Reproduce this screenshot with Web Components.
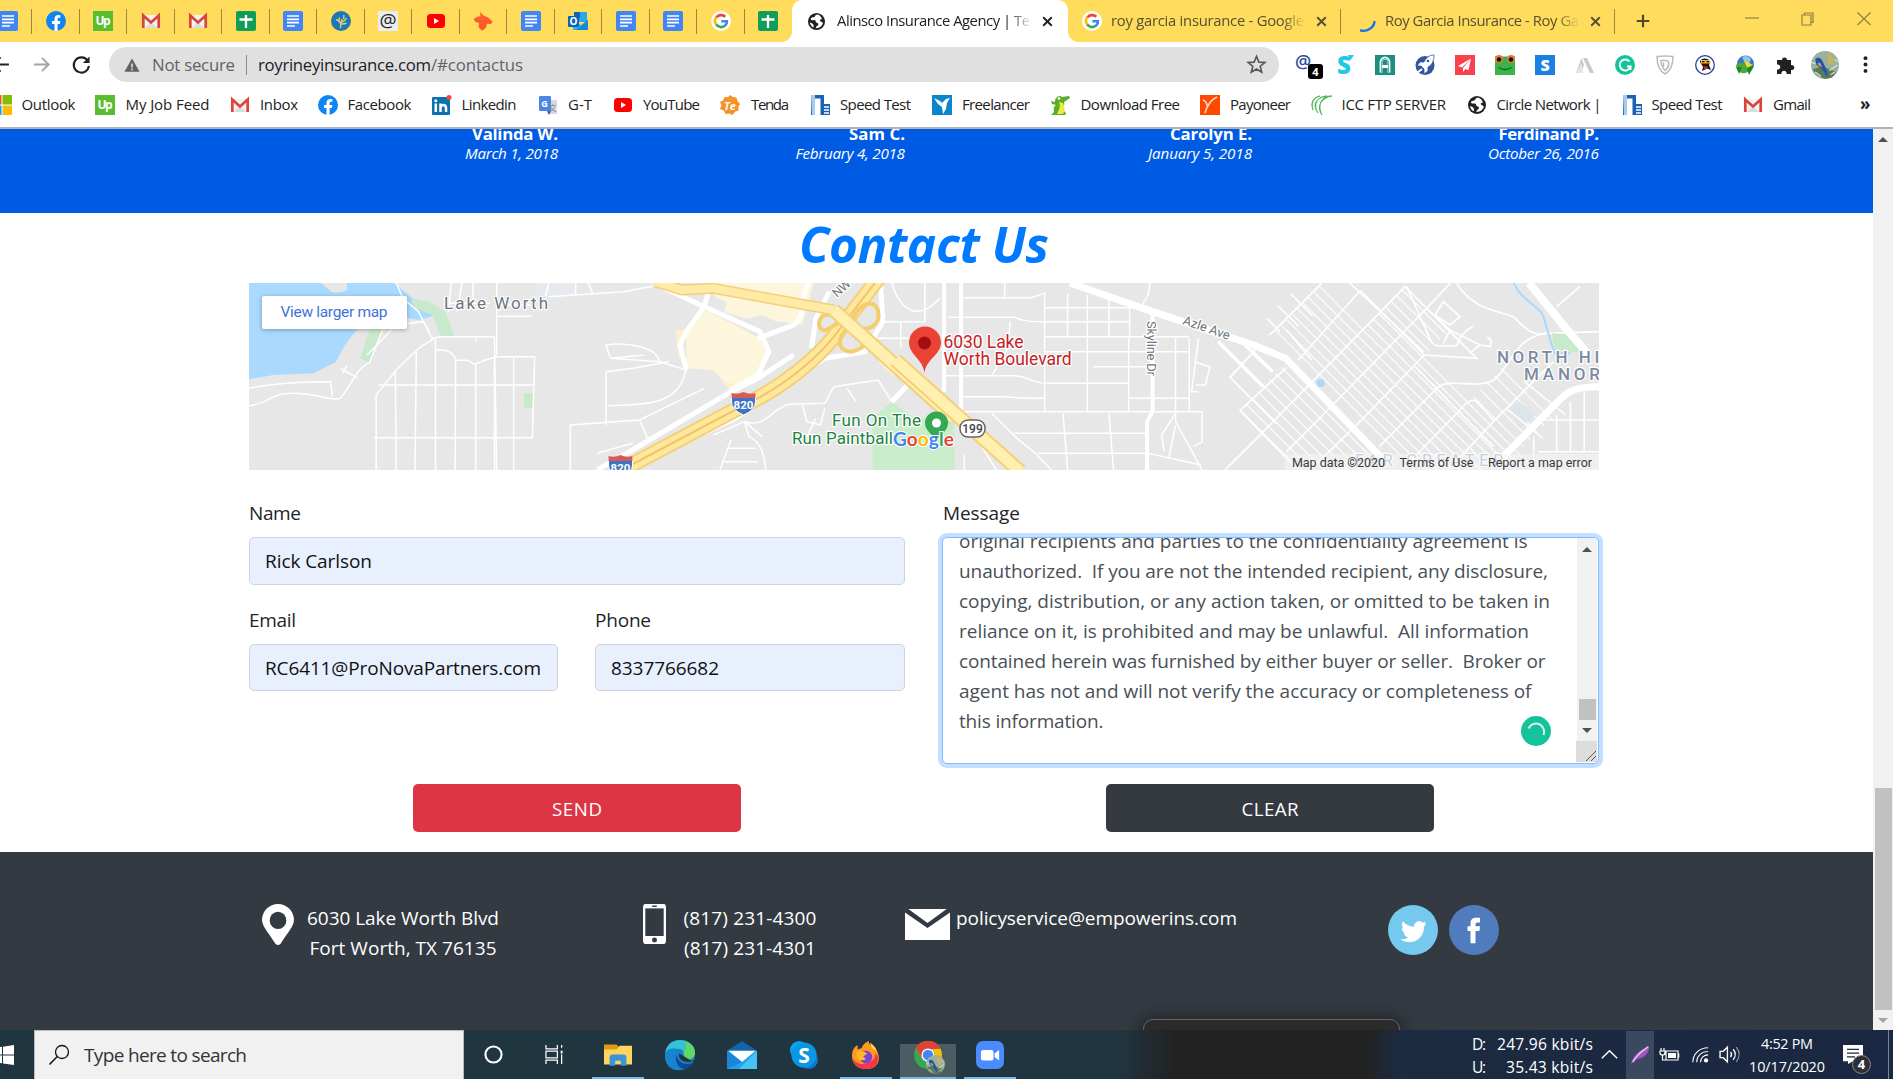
<!DOCTYPE html>
<html lang="en">
<head>
<meta charset="utf-8">
<title>Alinsco Insurance Agency</title>
<style>
html,body{margin:0;height:1079px;overflow:hidden;background:#fff}
body{font-family:"Open Sans","Noto Sans",sans-serif;color:#212529}
</style>
</head>
<body>
<desktop-screen></desktop-screen>
<script>
const define=(name,html,extra)=>{
  const t=document.createElement('template');t.innerHTML=html;
  customElements.define(name,class extends HTMLElement{
    connectedCallback(){
      if(this.shadowRoot)return;
      this.attachShadow({mode:'open'}).append(t.content.cloneNode(true));
      if(extra)extra.call(this,this.shadowRoot);
    }
  });
};

/* Line of text whose tracking is adjusted so that it fills the width in w. */
define('fit-text','<style>:host{display:block;flex:none;white-space:pre;text-align:left}span{display:inline-block;white-space:pre}</style><span></span>',function(r){
  const s=r.querySelector('span'),txt=this.getAttribute('t'),w=+this.getAttribute('w'),size=this.getAttribute('size');
  s.textContent=txt;
  if(size)this.style.fontSize=size+'px';
  const n=s.getBoundingClientRect().width;
  if(w&&n){this.style.width=w+'px';s.style.letterSpacing=((w-n)/Math.max(1,txt.length-1))+'px';}
});

const T=(x,y,s,txt,fill,extra='')=>`<text x="${x}" y="${y}" font-size="${s}" fill="${fill}" text-anchor="middle" font-family="Open Sans,sans-serif" ${extra}>${txt}</text>`;
const docs='<rect width="20" height="20" rx="2" fill="#4285f4"/><path d="M4 5h12M4 8.300h12M4 11.600h12M4 15h8" stroke="#fff" stroke-width="1.700"/>';
const fb='<circle cx="10" cy="10" r="10" fill="#1184f5"/><path d="M8.500 20v-7H6v-3h2.500V8c0-2.700 1.500-4 3.900-4l2 .2v2.500h-1.200c-1.200 0-1.600.7-1.600 1.500V10h2.700l-.4 3h-2.300v7z" fill="#fff"/>';
const up='<rect width="20" height="20" fill="#5bbc2f"/>'+T(10,14,12,'Up','#fff','font-weight="700" textLength="15"');
const gm='<path d="M2 4h16v13H2z" fill="#f2f2f2"/><path d="M4 17l6-6 6 6z" fill="#dcdcdc"/><path d="M2.300 17V4.500L10 11.500l7.700-7V17" fill="none" stroke="#d9453a" stroke-width="2.700"/>';
const sheet='<rect width="20" height="20" rx="2" fill="#0f9d58"/><path d="M10 4v13M3.500 8.500h13" stroke="#fff" stroke-width="2.300"/>';
const yt='<rect x="1" y="3" width="18" height="14" rx="3.500" fill="#f00"/><path d="M8 7v6l5-3z" fill="#fff"/>';
const goog='<circle cx="10" cy="10" r="10" fill="#fff"/><g fill="none" stroke-width="2.600"><path d="M5.300 6.500A6 6 0 0 1 14.300 5.800" stroke="#ea4335"/><path d="M5.300 6.300a6 6 0 0 0 0 7.300" stroke="#fbbc05"/><path d="M5.200 13.500a6 6 0 0 0 8.900 1.100" stroke="#34a853"/><path d="M14 14.800c1.500-1.200 2-2.800 1.900-4.600H10.300" stroke="#4285f4"/></g>';
const globe='<circle cx="10" cy="10" r="9" fill="#202124"/><path d="M11 2.500c-3 .5-2 2-3.500 2.700C6 6 4.500 5.500 4 7c-.3 1.500 2 1.800 3.500 1.500 2 0 1.300 2.500 3 3 1.500.3 2 1.200 1 2.500-.7.900-2 .8-2.200 3 4.500 0 7-3 7.500-5.500-1-1.500-2.300-1-3-2.300-.5-1.200 1-1.700 2.200-1.500C15 5 13.500 3 11 2.500zM3 11c2 .5 3.500 1.300 4 3 .2 1.200-.2 2-.5 2.300C4.500 15 3.200 13 3 11z" fill="#fff"/>';
const speed='<path d="M1 0h13v20H1z" fill="#1c62b4"/><path d="M5 3.500h5.500V20H5z" fill="#fff"/><path d="M1 0h4v20H2z" fill="#a9cbee"/><path d="M12 9h8v11h-8z" fill="#1c62b4"/><path d="M14 12h5M14 15h5M14 18h5" stroke="#fff" stroke-width="1.300"/>';
const bird='<circle cx="10" cy="10" r="10" fill="#9db09b"/><path d="M1 13l7-2 10 4-3 4-5 1-6-3z" fill="#5c7a5a"/><path d="M12 2l3 1 1 4-1 3-3-2z" fill="#c9b35b"/><path d="M3 6c2-2 4-1 5 1l3 6 1 6-4-6-4-3z" fill="#1756b5"/><path d="M5 8l2 1 1 3-3-2z" fill="#e8972c"/><path d="M0 8l3 1M13 14l6-4M3 15l4 3M14 17l3-2M17 6l2 2" stroke="#dfe8dc" stroke-width=".8"/>';
const chrome='<circle cx="10" cy="10" r="10" fill="#34a853"/><path d="M1.300 5A10 10 0 0 1 18.700 5L10 6z" fill="#ea4335"/><path d="M1.300 5L5.700 12.500 10 5.500h8.900A10 10 0 0 1 9.800 20L14.300 12.500A5 5 0 0 0 10 5.200z" fill="#fbbc05"/><path d="M1.300 5L5.700 12.500 10 6 18.900 5.200A10 10 0 0 0 1.300 5z" fill="#dc4437"/><circle cx="10" cy="10" r="4.700" fill="#fff"/><circle cx="10" cy="10" r="3.700" fill="#4285f4"/>';
const ICONS={docs,fb,up,gm,sheet,yt,goog,globe,speed,bird,chrome,
tree:'<circle cx="10" cy="10" r="10" fill="#1d78b4"/><path d="M9.500 17c0-4 .5-6 1.500-9M10 13C8 10 7.500 9 5 8.500M12.500 8c.5-1.500.5-2.500.3-4M11 11c2.500-1 3.500-2 4.500-4M10.500 13c2 0 4 0 5-1M8 10.500C8.300 9 8 7.500 8.500 6.500" stroke="#e3cd85" stroke-width="1.400" fill="none"/>',
at:'<rect width="20" height="20" fill="#e9edf0"/>'+T(10,16,19,'@','#222'),
fox:'<path d="M7 1l3.500 3.500L15 6.500l4.500 4-1.500 2.500-4-.3-1 4-4 3-3.500-3.500L6 12l-3.500-1L.5 8l4.500-2.500 2.500 0z" fill="#ff5a2c"/>',
outlook:'<rect x="6" y="1" width="13" height="10" fill="#28a8ea"/><path d="M6 1h6v6H6z" fill="#0b64b5"/><path d="M5 9l8 5 7-5v10H5z" fill="#2fb5f0"/><path d="M20 9v10H8z" fill="#138ad6"/><rect y="5" width="11" height="11" rx="1" fill="#0a64b8"/>'+T(5.5,14,10,'O','#fff','font-weight="700"'),
ms:'<path d="M0 0h9.500v9.500H0z" fill="#f35325"/><path d="M10.500 0H20v9.500h-9.500z" fill="#81bc06"/><path d="M0 10.500h9.500V20H0z" fill="#05a6f0"/><path d="M10.500 10.500H20V20h-9.500z" fill="#ffba08"/>',
linkedin:'<rect y="2" width="18" height="18" rx="1" fill="#0a72ae"/><path d="M3.800 8.500v8.500M8.500 17V8.500M8.500 13c0-4 5.500-4 5.500 0v4" stroke="#fff" stroke-width="2.500" fill="none"/><circle cx="3.800" cy="5.700" r="1.500" fill="#fff"/><circle cx="17" cy="2.500" r="2.500" fill="#f4473c"/>',
gt:'<path d="M8 5h11v14H10z" fill="#d7dade"/><rect x="1" y="1" width="12" height="15" rx="1" fill="#4a86e8"/><path d="M9 16h4l-2 4z" fill="#2b56c0"/>'+T(6.5,11.5,9,'G','#fff','font-weight="700"')+T(14.5,16,8,'文','#7d858c','style="font-family:Noto Sans CJK SC"'),
tenda:'<path d="M10 0l3 2 3.500.5.8 3.300L20 9l-1.700 3 .2 3.500-3.500 1.200L12.500 20 9 18.500 5.500 19 4 15.700 0 14l1.300-3.700L0 7l3.300-1.700L4.500 2l3.500.2z" fill="#f7922a"/>'+T(10,14.5,11,'Te','#fff','font-weight="700" font-style="italic"'),
freelancer:'<rect width="20" height="20" fill="#0a87cc"/><path d="M2 3l6 3 2 2 4-4 4-1-3 5-1 6-3 5-1-7-4-3z" fill="#fff"/>',
croc:'<path d="M5 5c2-4 5-5 7-3l7-1 1 2-6 4c1 3-1 6-1 8l3 3-1 2H1l3-3c-1-3 0-6 2-7l-4-1-1-3 4 1z" fill="#5aae2b"/><path d="M9 7c2 4 0 8-2 12h6c3-4 1-8 0-11z" fill="#f2ea3a"/><circle cx="9" cy="3.500" r="1.300" fill="#fff"/>',
payoneer:'<rect width="20" height="20" fill="#ff4800"/><path d="M3 5c3 1 4 4 4.500 6M17 2C10 5 7 11 5 18" stroke="#ffd5c4" stroke-width="1.700" fill="none"/>',
icc:'<path d="M20 1C10 0 5 9 10 20 4 12 9 3 20 1zM15 1C5 1 1 10 6 18 0 10 3 3 15 1zM8 1C1 3-1 9 1 15-2 8 1 2 8 1z" fill="#3fae49" stroke="#3fae49" stroke-width=".7"/>',
spin:'<path d="M3 16.500C9 18 15.500 14 16.500 8" stroke="#1a73e8" stroke-width="2.400" fill="none" stroke-linecap="round"/>',
close:'<path d="M5.500 5.500l9 9M14.500 5.500l-9 9" stroke="currentColor" stroke-width="2"/>',
plus:'<path d="M10 3v14M3 10h14" stroke="#4f4830" stroke-width="2.400"/>',
wmin:'<path d="M3 8h14" stroke="#8f7f4a" stroke-width="1.200"/>',
wmax:'<path d="M4 5h9v10H4zM6.500 5V3H15v9.500h-2" stroke="#8f7f4a" fill="none" stroke-width="1.200"/>',
wclose:'<path d="M3.500 2.500l13 12.500M16.500 2.500L3.500 15" stroke="#8f7f4a" stroke-width="1.200"/>',
back:'<path d="M18 10H3M10 3l-7 7 7 7" stroke="#202124" stroke-width="2" fill="none"/>',
fwd:'<path d="M2 10h15M10.500 3l7 7-7 7" stroke="#a3a5a8" stroke-width="2" fill="none"/>',
reload:'<path d="M16.500 6A8 8 0 1 0 17.800 11.500" stroke="#202124" stroke-width="2.200" fill="none"/><path d="M18.500 1.500v7h-7z" fill="#202124"/>',
warn:'<path d="M10 2l9.500 16.500H.5z" fill="#5f6368"/><path d="M10 8v5M10 14.500v2" stroke="#e0e0e0" stroke-width="2"/>',
star:'<path d="M10 1.500l2.500 6 6.300.4-4.900 4 1.600 6.200L10 14.700l-5.500 3.400 1.600-6.200-4.900-4 6.300-.4z" stroke="#55585c" stroke-width="1.700" fill="none"/>',
at2:T(8,12.500,18,'@','#2c4d9d','font-weight="600"'),
scyan:T(9,19,24,'S','#1fc8e8','font-weight="800"')+'<path d="M13 0l6 0-4 6z" fill="#26c7f0"/>',
agreen:'<rect width="20" height="20" fill="#1a8f80"/><path d="M6 17.500V7a4 4 0 0 1 8 0v10.500M6 11.500h8" stroke="#fff" stroke-width="2.800" fill="none"/><path d="M6.500 17V7a3.500 3.500 0 0 1 7 0v10" stroke="#1a8f80" stroke-width=".7" fill="none"/>',
rocket:'<circle cx="10" cy="10.500" r="9.500" fill="#33569e"/><path d="M19 0c-5 0-8 3-10 7H5l-3 4h4l3 3v5l4-3v-4c4-2 6-6 6-12z" fill="#fff" stroke="#33569e" stroke-width=".8"/><circle cx="13" cy="6" r="1.300" fill="#33569e"/><path d="M2 18l5-4" stroke="#fff" stroke-width="2"/>',
plane:'<rect width="20" height="20" fill="#fb414b"/><path d="M16 3.500L3 11l4 1.500zM16 3.500L8 13v4l2.500-3 3 1.300z" fill="#fff"/>',
frog:'<rect y="1.500" width="20" height="18.500" fill="#3bb54a"/><circle cx="4" cy="4" r="4" fill="#e57c35"/><circle cx="16" cy="4" r="4" fill="#e57c35"/><circle cx="4" cy="4.500" r="2.200" fill="#111"/><circle cx="16" cy="4.500" r="2.200" fill="#111"/><path d="M3.500 12.500q6.500 4 13 0" stroke="#185c23" stroke-width="1.400" fill="none"/>',
sblue:'<rect width="20" height="20" fill="#1b7fe3"/>'+T(10,15.5,16,'S','#fff','font-weight="800"'),
aa:'<path d="M1 18L6.500 3 9 10 6 18zM8 3h4l7 15h-4z" fill="#c9c9c9"/><path d="M1 18L6.500 8 8 18z" fill="#e4e4e4"/>',
gram:'<circle cx="10" cy="10" r="10" fill="#15c39a"/><path d="M14.500 6.500a5.500 5.500 0 1 0 1 5H12M15.500 11v4" stroke="#fff" stroke-width="1.900" fill="none"/>',
shield:'<path d="M2 1.500q8-1 16 0c0 9-2 14-8 17.500C4 15.500 2 10.500 2 1.500z" fill="none" stroke="#bbb" stroke-width="1.500"/><path d="M6 5.500h5c4 0 3.500 7-1 10C7 12 6 9 6 5.500zm2.500 2v4" fill="none" stroke="#bbb" stroke-width="1.500"/>',
ninja:'<circle cx="10" cy="10" r="9.300" fill="#fff" stroke="#24439a" stroke-width="1.300"/><path d="M5 7c0-4 8-5 10.500 0L14 10l2 5-4-1.500L7 16l1-4z" fill="#23160f"/><path d="M6 5h9v3.500H6z" fill="#f5b93c"/><path d="M8 11l5 1-3 3z" fill="#d33127"/><path d="M7 6.700h2.500M11.500 6.700H14" stroke="#111" stroke-width="1.300"/>',
idm:'<circle cx="10.500" cy="9" r="8.500" fill="#3d78be"/><path d="M1 10c3-3 6-1 9-3l5 9-5 2c-4 1-8-2-9-8z" fill="#4ca935"/><path d="M7 2q6-3 9 2l-3 7-3-3z" fill="#8ec7f2"/><path d="M1 12h6l-3 7zM11 11h8l-5 9z" fill="#168a2c"/><path d="M9 5l9 5-6 3z" fill="#f3d63a"/>',
puzzle:'<path d="M2 5h5a2.500 2.500 0 1 1 5 0h4v5a2.600 2.600 0 1 1 0 5v4h-4.500a2.600 2.600 0 1 0-5 0H2v-4.500a2.600 2.600 0 1 0 0-5z" fill="#202124"/>',
dots:'<circle cx="10" cy="2.500" r="2.300" fill="#202124"/><circle cx="10" cy="10" r="2.300" fill="#202124"/><circle cx="10" cy="17.500" r="2.300" fill="#202124"/>',
win:'<path d="M0 3l8-1.200V9.500H0zM9 1.700L20 0v9.500H9zM0 10.500h8v7.700L0 17zM9 10.500h11V20L9 18.400z" fill="#fff"/>',
lens:'<circle cx="13" cy="7" r="6.500" stroke="#111" stroke-width="1.300" fill="none"/><path d="M8.300 11.500L.5 19.500" stroke="#111" stroke-width="1.500"/>',
cortana:'<circle cx="10" cy="10" r="8.500" stroke="#fff" stroke-width="2.200" fill="none"/>',
task:'<path d="M1 0v4h12V0M1 20v-4h12v4M1 6.500h12v7H1zM17.500 0v3M17.500 10v10" stroke="#fff" stroke-width="1.300" fill="none"/><path d="M16.500 6h2v3h-2z" fill="#fff"/>',
folder:'<path d="M0 2h9l2 2.500V8H0z" fill="#e09a10"/><path d="M0 6h9l2-3h9v15H0z" fill="#ffd45e"/><path d="M4 19v-7q0-2 2-2h8q2 0 2 2v7h-4v-4H8v4z" fill="#3b94dd"/>',
edge:'<circle cx="10" cy="10" r="10" fill="#1a7fc9"/><path d="M0 9C1 2 6 0 10 0c6 0 10 4 10 8 0 4-4 6-8 4 2-2 1-6-3-6-4-1-8 0-9 3z" fill="#35c1d6"/><path d="M13 .5c5 2 7 5 7 8 0 4-5 6-8 4 1-2 1-3 0-4 2-2 3-5 1-8z" fill="#61d864"/><path d="M8 9c-3 3-1 10 5 10.500C5 22 0 17 0 11 1 6 6 5 9 7z" fill="#1683d3"/><path d="M8 10c-2 4 1 9 5 9.500 3-.5 5-2.300 6-4.500-4 2-11 1-11-5z" fill="#0c4a94"/><path d="M9.500 9c-1 3 2 6.500 8 5.500l2-1.500v2" fill="#20353f"/>',
mail:'<path d="M0 7l10-7 10 7v2H0z" fill="#1363ad"/><path d="M0 7h20v13H0z" fill="#26a0ea"/><path d="M1 7h18l-9 8z" fill="#fff"/><path d="M20 7v13H8z" fill="#48c2f5"/><path d="M0 7l10 8-10 5z" fill="#1a86d8"/>',
skype:'<circle cx="6.500" cy="6.500" r="6.500" fill="#0aa5ea"/><circle cx="13.500" cy="13.500" r="6.500" fill="#0877cf"/><circle cx="10" cy="10" r="9" fill="#0a96e4"/>'+T(10,15.500,15,'S','#fff','font-weight="700"'),
firefox:'<path d="M0 11C0 6 2 4 4 3v3l3-1c1-3 3-4 5-5 0 3 2 3 5 6 4 5 3 14-7 14C4 20 0 16 0 11z" fill="#ff9a1f"/><path d="M0 11c2 5 6 6 10 5 5-1 7-4 7-9 3 6 2 13-7 13C4 20 0 16 0 11z" fill="#f4364c"/><circle cx="10" cy="11.500" r="4.500" fill="#7b42d1"/><path d="M3 8q4-2 8 1l-3 2 2 2q-4 2-6-1z" fill="#ffb829"/><path d="M13 1q0 3 4 6l1 4q0-5-2-7z" fill="#ffdf43"/>',
zoom:'<rect width="20" height="20" rx="5" fill="#4a8cff"/><rect x="3.500" y="6.500" width="9" height="7.500" rx="1.500" fill="#fff"/><path d="M13.300 9l3.200-2.500V14l-3.200-2.500z" fill="#fff"/>',
chev:'<path d="M1 14.500l9-9 9 9" stroke="#fff" stroke-width="1.700" fill="none"/>',
feather:'<path d="M0 20C1 11 8 5 19 0c0 6-3 11-9 13-3 1-7 2-10 7z" fill="#a155c4"/><path d="M2 17C5 10 11 6 18 1" stroke="#e3c2f0" stroke-width="1.500" fill="none"/>',
battery:'<path d="M6 6h12v9H6zM18.700 8.500v4M1 3v3M4 3v3M0 6h5v2q0 2-2.500 2T0 8zM2.500 10v5h3" stroke="#fff" stroke-width="1.200" fill="none"/><path d="M8 8h8v5H8z" fill="#fff"/>',
wifi:'<g stroke="#fff" stroke-width="1.300" fill="none"><path d="M1 19C1 10 8 2 19 2"/><path d="M5.500 19C5.500 12 11 6.500 19 6.500" opacity=".9"/><path d="M10 19c0-5 4-8.500 9-8.500"/></g><circle cx="16.500" cy="17" r="2.500" fill="#fff"/>',
speaker:'<path d="M1 7h3l4-4v14l-4-4H1z" stroke="#fff" stroke-width="1.300" fill="none"/><path d="M11 7.500q2 2.500 0 5M13.500 5q4 5 0 10" stroke="#fff" stroke-width="1.200" fill="none"/><path d="M16.500 3q5.500 7 0 14" stroke="#9aa3b1" stroke-width="1" fill="none"/>',
note:'<path d="M0 0h20v17H10l-5 3v-3H0z" fill="#fff"/><path d="M4 4.500h12M4 8.500h12M4 12.500h8" stroke="#1b2940" stroke-width="1.300"/>',
pin:'<path d="M10 0C4.500 0 .2 3.400 0 7.600 0 11 4 14 8.500 19.500q1.500 1 3 0C16 14 20 11 20 7.600 19.800 3.400 15.500 0 10 0z" fill="#fff"/><ellipse cx="10" cy="8" rx="5.200" ry="4.200" fill="#343a42"/>',
phone:'<rect width="20" height="20" rx="2" fill="#fff"/><path d="M2 2.200h16V16H2z" fill="#343a42"/><path d="M8 1.100h4" stroke="#343a42" stroke-width=".7"/><ellipse cx="10" cy="18" rx="2.200" ry="1.200" fill="#343a42"/>',
envelope:'<path d="M1.500 0h17L10 9z" fill="#fff"/><path d="M0 2.200l10 10 10-10V20H0z" fill="#fff"/>',
twitter:'<circle cx="10" cy="10" r="10" fill="#76c9ee"/><path d="M15 7.400l-.9.400.7-1-1 .4c-1.200-1.200-3.500-.4-3.300 1.700-1.800-.1-3.400-.9-4.500-2.200-.6 1-.3 2.200.6 2.900l-.9-.3c0 1.100.7 1.900 1.700 2.100h-.9c.3.900 1 1.400 1.900 1.500-.9.700-1.900 1-3.100.9 4 2.300 8.900.100 8.900-4.900z" fill="#fff" stroke="#fff" stroke-width=".3"/>',
fbook:'<circle cx="10" cy="10" r="10" fill="#507cbe"/><path d="M8.600 15.300V10.400H7.400V8.500h1.200V7.400c0-1.600.8-2.300 2.300-2.300h1.500V7h-1c-.6 0-.8.300-.8.800v.7h1.800l-.2 1.900h-1.600v4.900z" fill="#fff"/>'
};
define('ui-icon','<style>:host{display:block;flex:none}svg{display:block;width:100%;height:100%;overflow:visible}</style><svg viewBox="0 0 20 20" preserveAspectRatio="none"></svg>',function(r){
  r.querySelector('svg').innerHTML=ICONS[this.getAttribute('name')];
  const s=+this.getAttribute('s')||20;
  this.style.width=s+'px';this.style.height=(+this.getAttribute('h')||s)+'px';
});

/* Tab strip */
const mini=['docs','fb','up','gm','gm','sheet','docs','tree','at','yt','fox','docs','outlook','docs','docs','goog','sheet'];
define('tab-strip',`<style>
:host{display:flex;height:42px;background:#ffdc5c;font-size:14.8px;line-height:40px;overflow:hidden}
.mini{width:47.500px;flex:none;display:flex;align-items:center;justify-content:center;position:relative}
.minis{display:flex;margin-left:-15.500px}
.mini::after,.tab.sep::after{content:"";width:1px;height:25px;background:#9b8740;position:absolute;right:0;top:9px}
.mini:last-child::after{display:none}
.tab{display:flex;align-items:center;position:relative;flex:none;box-sizing:border-box;color:#574f33}
.tab.on{background:#fff;width:276px;border-radius:10px 10px 0 0;padding-left:15px;color:#202124}
.tab.on::before,.tab.on i{content:"";position:absolute;bottom:0;left:-10px;width:10px;height:10px;background:radial-gradient(circle at 0 0,transparent 9.500px,#fff 10px)}
.tab.on i{left:auto;right:-10px;background:radial-gradient(circle at 100% 0,transparent 9.500px,#fff 10px)}
.t{overflow:hidden;height:42px;-webkit-mask-image:linear-gradient(90deg,#000 calc(100% - 24px),transparent)}
.win{display:flex;margin-left:auto;padding:10px 19px 0 0;gap:36px}
</style>
<div class="minis">${mini.map(n=>`<div class="mini"><ui-icon name="${n}"></ui-icon></div>`).join('')}</div>
<div class="tab on"><i></i><ui-icon name="globe" s="19"></ui-icon><div class="t" style="margin-left:11px;width:195px"><fit-text w="193" t="Alinsco Insurance Agency | Te"></fit-text></div><ui-icon name="close" s="19" style="margin-left:6px"></ui-icon></div>
<div class="tab sep" style="width:273px;padding-left:14px"><ui-icon name="goog"></ui-icon><div class="t" style="margin-left:9px;width:195px"><fit-text w="193" t="roy garcia insurance - Google"></fit-text></div><ui-icon name="close" s="19" style="margin-left:6px"></ui-icon></div>
<div class="tab sep" style="width:274px;padding-left:17px"><ui-icon name="spin" style="margin-top:6px"></ui-icon><div class="t" style="margin-left:7px;width:195px"><fit-text w="194" t="Roy Garcia Insurance - Roy Ga"></fit-text></div><ui-icon name="close" s="19" style="margin-left:6px"></ui-icon></div>
<div class="tab" style="padding-left:19px"><ui-icon name="plus" s="18"></ui-icon></div>
<div class="win"><ui-icon name="wmin"></ui-icon><ui-icon name="wmax"></ui-icon><ui-icon name="wclose"></ui-icon></div>`);

/* Navigation row */
const exts=['scyan','agreen','rocket','plane','frog','sblue','aa','gram','shield','ninja','idm','puzzle'];
define('nav-bar',`<style>
:host{display:flex;align-items:center;height:45px;font-size:16.800px;line-height:34px}
.bar{width:1170px;height:35px;border-radius:18px;background:#e0e0e0;display:flex;align-items:center;box-sizing:border-box;padding:0 13px 0 15px;margin-left:18px;color:#5f6368;flex:none}
.sep{width:1px;height:20px;background:#8a8a8a;margin:0 11px 0 11px}
.x{width:40px;display:flex;justify-content:center;position:relative;flex:none}
.badge{position:absolute;left:23px;top:9px;width:15px;height:15px;border-radius:3px;background:#000;color:#fff;font:700 11px/15px "Open Sans";text-align:center}
</style>
<ui-icon name="back" s="21" style="margin-left:-10px"></ui-icon><ui-icon name="fwd" s="19" style="margin-left:21px"></ui-icon><ui-icon name="reload" s="19" style="margin-left:21px"></ui-icon>
<div class="bar"><ui-icon name="warn" s="16"></ui-icon><fit-text style="margin-left:12px" w="83" t="Not secure"></fit-text><div class="sep"></div><fit-text style="color:#202124" w="173" t="royrineyinsurance.com"></fit-text><fit-text w="92" t="/#contactus"></fit-text><ui-icon name="star" s="19" style="margin-left:auto"></ui-icon></div>
<div class="x" style="margin-left:6px"><ui-icon name="at2"></ui-icon><span class="badge">4</span></div>
${exts.map(n=>`<div class="x"><ui-icon name="${n}"></ui-icon></div>`).join('')}
<div class="x"><ui-icon name="bird" s="28"></ui-icon></div><div class="x"><ui-icon name="dots" s="17"></ui-icon></div>`);

/* Bookmarks: left edge, icon, label left edge, label width, label */
const marks=[[-8,'ms',21.5,54,'Outlook'],[95,'up',125.5,84,'My Job Feed'],[230,'gm',260,38,'Inbox'],[318,'fb',347.5,64,'Facebook'],[432,'linkedin',461.5,55,'Linkedin'],[538,'gt',568,24,'G-T'],[613,'yt',643,57,'YouTube'],[720,'tenda',751,38,'Tenda'],[809.5,'speed',840,71,'Speed Test'],[932,'freelancer',962,68,'Freelancer'],[1050,'croc',1080.5,99.5,'Download Free'],[1200,'payoneer',1230,61,'Payoneer'],[1312,'icc',1341.5,104.5,'ICC FTP SERVER'],[1467,'globe',1496.5,105,'Circle Network |'],[1621.5,'speed',1651.5,71,'Speed Test'],[1743,'gm',1773,38,'Gmail']];
define('book-marks',`<style>
:host{display:flex;height:40px;align-items:center;font-size:15px;line-height:34px;color:#222;padding-bottom:5px;box-sizing:border-box;margin-left:-8px}
div{display:flex;align-items:center;flex:none}fit-text{margin-top:-1px}
</style>${marks.map((m,i)=>`<div style="width:${(marks[i+1]?marks[i+1][0]:1860)-m[0]}px"><ui-icon name="${m[1]}"></ui-icon><fit-text style="margin-left:${m[2]-m[0]-20}px" w="${m[3]}" t="${m[4]}"></fit-text></div>`).join('')}<b style="font-size:17px;margin-top:-2px">»</b>`);

define('browser-chrome',`<style>:host{display:flex;flex-direction:column;height:129px;background:#fff;border-bottom:2px solid #b1b2b4;box-sizing:border-box;flex:none}</style><tab-strip></tab-strip><nav-bar></nav-bar><book-marks></book-marks>`);

/* Testimonial attributions */
const people=[['Valinda W.',86,'March 1, 2018',93,558],['Sam C.',56,'February 4, 2018',109.5,905],['Carolyn E.',82,'January 5, 2018',104,1252],['Ferdinand P.',100.5,'October 26, 2016',111,1599]];
define('review-strip',`<style>
:host{display:flex;height:84px;background:#005be4;color:#fff;overflow:hidden;font-size:15.200px}
div{display:flex;flex-direction:column;align-items:flex-end;flex:none;margin-top:-7px}
b{font-size:16.800px;line-height:24px;font-weight:700;height:20px}em{line-height:22px}
</style>${people.map((p,i)=>`<div style="width:${p[4]-(i?people[i-1][4]:0)}px"><b><fit-text w="${p[1]}" t="${p[0]}"></fit-text></b><em><fit-text w="${p[3]}" t="${p[2]}"></fit-text></em></div>`).join('')}`);

/* Street map, drawn on a free canvas */
const L=(d,w=1.5,c='#fff')=>`<path d="${d}" stroke="${c}" stroke-width="${w}" fill="none" vector-effect="non-scaling-stroke"/>`;
const lab=(x,y,w,s,f,t,ex='')=>`<text x="${x}" y="${y}" textLength="${w}" font-size="${s}" fill="${f}" stroke="#fff" stroke-width="2.500" paint-order="stroke" stroke-linejoin="round" ${ex}>${t}</text>`;
const ext=(x,y)=>`<g transform="translate(${x} ${y})"><path d="M-12 0q6 2 12-1 6 3 12 1v8q0 8-12 13-12-5-12-13z" fill="#3f74c4" stroke="#fff" stroke-width="1"/><path d="M-12-1q6 2 12-1 6 3 12 1v5h-24z" fill="#d65a57"/><text y="15" text-anchor="middle" font-size="11.500" font-weight="700" fill="#fff">820</text></g>`;
/* Diagonal blocks: c = x - y names a street, s = x + y is the distance along it */
const diag=(c,s0,s1)=>`M${(s0+c)/2} ${(s0-c)/2}L${(s1+c)/2} ${(s1-c)/2}`;
let blocks='';
for(let c=60;c<340;c+=36)blocks+=diag(c,836,c+1140);
for(let c=405;c<690;c+=33)blocks+=diag(c,710,c+1140);
for(let c=700;c<790;c+=33)blocks+=diag(c,965,c+1140);
for(let c=805;c<930;c+=34)blocks+=diag(c,965,1228);
for(let c=800;c<1010;c+=42)blocks+=diag(c,1500,Math.min(c+1140,1800));
const avenues=['M538 165L560 145 695 10','M625 240L812 30','M590 150L665 240','M405 570L515 460 660 312 945 20','M590 515L725 378 1010 85 1080 10','M660 570L795 440 1003 225','M745 570L795 520','M868 500L1040 325','M935 570L1110 390Q1140 350 1160 365L1210 420','M1010 560L1040 520','M1075 570L1210 425 1390 245','M450 392L590 262','M450 392L625 570','M500 205L420 292 560 432','M945 20L1160 235 1003 225 810 30','M975 260L1210 500','M780 10L1000 215','M530 115l40 40M565 78l60 60M603 42l65 65','M1100 10C1150 90 1220 90 1270 110 1310 150 1330 170 1370 160L1527 155','M1040 325C1080 290 1160 330 1210 300 1260 270 1270 170 1370 160','M1010 85L1080 150 1170 195 1200 200Q1210 175 1190 172M1170 195l-25 20M1060 65l50 45-30 25-45-30zM1080 150l-20 40M950 20L1015 165Q1025 200 1050 198L1100 198Q1110 160 1150 138','M1400 80L1470 20'];
const mapSvg=`<svg width="1350" height="187" viewBox="0 0 1350 187" font-family="Roboto,sans-serif">
<rect width="1350" height="187" fill="#e7e7e7"/>
<g transform="matrix(.4464 0 0 .33333 -9 -158)">
<path d="M660 474h88v38l-88 6z" fill="#e6eaee"/>
<path d="M20 474H345L400 535 440 570 400 585 310 560 258 620 235 660 215 710 165 745 75 750 20 763z" fill="#a9d9fe"/>
<path d="M182 474h57l2 20-15 8h-20z" fill="#e7e7e7"/>
<path d="M385 520L425 530 460 560 480 632 450 634 430 570 390 548z" fill="#c9e9cc"/><path d="M290 612h30L294 700 290 713 270 700z" fill="#c9e9cc"/>
<path d="M636 805h20v44h-20z" fill="#c9e9cc"/><path d="M1417 1035V880L1460 830 1500 870 1534 880V1035zM1500 880h100v155h-100z" fill="#c9edca"/>
<path d="M1055 474h230l-25 125-60-10-30-20-35 12-50-20 5-30-25-15zM1040 555L1000 620 1000 730 1060 735 1105 800 1165 745 1180 700 1175 650 1110 600z" fill="#fdf5dc"/><path d="M975 615h20v85h-12zM1080 770l45 10-25 20zM1430 710l40-5 45 80-30-30-25-5z" fill="#fdf0cf"/>
<g>${[
'M20 843C80 830 60 805 120 805 180 805 200 830 225 820 250 780 260 730 290 713L320 612','M20 790C70 775 150 770 203 770L207 815','M350 474L365 520 400 560 430 640 450 635H570','M473 474L467 560M497 474L487 560M522 474V520M575 474V690M467 535H560M600 540h50M692 474l-8 40M752 474v38M780 474l10 30M690 515L860 500 940 480','M575 574h78','M570 635L575 1035M438 640V1035M440 675C470 670 480 690 485 706H510L525 718 550 705 575 695H660L655 938H300M348 740L350 1035M395 680L392 1035M310 780H660M305 1035V810L350 735 400 670 435 640M483 706L482 1035M528 715V1035M570 700V1035M613 695V1035','M285 690L350 600 410 590 425 620M225 730l40 30M240 720l-10 25M528 640v10','M740 1035V900L895 885 1040 790M895 885L915 945M800 985L880 955M830 700L820 660C860 650 920 665 935 695L940 710 830 700 905 690M820 740L880 730 960 710M940 710L1000 735 990 770C970 830 920 840 825 842M820 740V900','M1060 930L1130 890 1140 935C1170 950 1175 1000 1178 1035M1130 890L1170 935M1100 945L1075 1035M1090 970h65M1080 1010h80','M1130 890C1180 910 1190 850 1230 838L1310 835 1330 785 1430 765 1460 830M1260 840l10 50 30 10 10-50M1360 790l20 40M1290 880l-20 55','M1440 590H1534V474M1420 640h114M1480 590v80','M1460 474C1480 560 1520 590 1568 520'].map(d=>L(d)).join('')}</g>
${['M950 490L1040 545 1165 620 1185 680 1160 750 1100 795','M1040 545L1000 620 985 660 1000 735','M1275 474C1250 520 1270 570 1240 600L1160 640','M1320 500L1290 580 1280 670','M1435 474L1440 590 1400 680 1310 700 1170 820 1110 880 860 1035','M1240 690L1160 760 1100 800 860 990 800 1035','M1510 760L1460 830','M1040 545L1055 474'].map(d=>L(d,5)).join('')}
<g>${L('M1430 460L1350 600C1300 700 1210 790 1130 840L855 1035',16,'#f3d078')+L('M1430 460L1350 600C1300 700 1210 790 1130 840L855 1035',12,'#ffe89b')+L('M1430 460L1350 600C1300 700 1210 790 1130 840L855 1035',2,'#efc46a')}
${L('M1350 575C1280 540 1290 640 1320 610L1345 590M1370 590C1390 520 1435 520 1430 580 1420 620 1390 615 1375 600M1370 600C1330 640 1340 680 1370 680 1410 670 1400 630 1385 610',4,'#f5cd6b')}
${L('M930 470L990 495 1060 490 1330 555',11,'#f3d078')+L('M930 470L990 495 1060 490 1330 555',8,'#ffeba6')+L('M1330 555L1600 880',15,'#f3d078')+L('M1330 555L1600 880',11,'#fff0b0')}</g></g>
<g transform="matrix(.33333 0 0 .33333 841 -3)">${L(blocks,1.1)}${avenues.map(d=>L(d,1.7)).join('')}${L('M385 185L520 320M465 195L548 275',3.5)}</g>
<g transform="matrix(.4592 0 0 .33333 651 -158)">
<path d="M1420 625l50 5 30 55-75-10z" fill="#c9e9cc"/><path d="M1325 850l25-20 35 40-35 40z" fill="#dee5ea"/>
${['M133 474V860M228 474v42M133 518H285L315 505V860M105 577H250C270 590 290 590 315 590M100 752H250C280 755 290 775 320 775H498M133 815H225C260 820 280 820 315 820M200 752L235 670 240 590M133 860H660M498 640V860M315 548H530M315 590H500M365 505V640M408 510V860M455 520V640M500 540V640M315 635H630M315 680H630M420 725H540M600 640V860M630 640V860M500 820h130M545 474L540 510 528 540','M200 865L255 940 295 985 330 1035M250 925H540M300 985H540M355 865L365 1035M455 865L465 1035M133 865L210 1035M140 990v45M180 945L135 860M600 865L570 930 575 980M600 890L600 860M658 865V950L640 965M600 890L658 1035M600 900L585 1000','M650 640l-15 160h15M640 710l35 15-10 55h-20','M540 985L655 1020','M1360 770L1450 870M1320 850L1400 940M1400 885H1522M1390 980H1522M1430 870V980M1460 830V980M1490 800V980','M1380 935V1035'].map(d=>L(d)).join('')}
${L('M1335 470C1355 530 1380 530 1400 570L1425 685 1460 685',2,'#a9d9fe')}<ellipse cx="916" cy="774" rx="9" ry="12" fill="#a9d9fe"/>
${L('M96 474V800M133 474V865',4)}${L('M550 560V860L538 890V1035',4)}
${L('M370 474L550 560 770 660 840 700 1050 1000',7)}${L('M1370 474L1450 610 1500 690',8)}${L('M1522 785C1470 785 1455 800 1440 820L1310 1000',7)}
${L('M-10 705L262 1040',15,'#f3d078')+L('M-10 705L262 1040',11,'#fff0b0')}</g>
${lab(195,26,104,17,'#6b7480','Lake Worth')}
<g transform="translate(588 15) rotate(-42)">${lab(0,0,29,12.5,'#70777d','NW L')}</g>
<g transform="translate(898 38) rotate(90)">${lab(0,0,55,13,'#70777d','Skyline Dr')}</g>
<g transform="translate(933 41) rotate(19)">${lab(0,0,49,13,'#70777d','Azle Ave')}</g>
${lab(1248,80,115,17,'#7c8ba1','NORTH HIL','font-weight="500"')}${lab(1275,97,76,17,'#7c8ba1','MANOR','font-weight="500"')}
${lab(1106,183,148,16,'#8595ad','FAR GREATER')}
${lab(694.5,65,80,17.5,'#c5221f','6030 Lake')}${lab(694.5,82,128,17.5,'#c5221f','Worth Boulevard')}
${lab(583,143,89,17,'#20843f','Fun On The')}${lab(543,161,101,17,'#20843f','Run Paintball')}
<path d="M675.500 90C674 76 660 72 660 59.500a16 16 0 0 1 32 0C692 72 677 76 675.500 90z" fill="#ea4335"/><circle cx="675.500" cy="60" r="6.500" fill="#a50e0e"/>
<path d="M687.500 157C684 152 676 148 676 140a11.500 11.500 0 0 1 23 0C699 148 691 152 687.500 157z" fill="#34a853"/><circle cx="687.500" cy="140" r="4.500" fill="#fff"/>
${ext(494.5,111)}${ext(371.5,174)}
<rect x="711" y="137" width="25" height="17" rx="8" fill="#fff" stroke="#666" stroke-width="1.500"/><text x="723.500" y="150" text-anchor="middle" font-size="12" font-weight="500" fill="#444">199</text>
<text x="644" y="163" font-size="19" textLength="61" font-family="Lato,sans-serif" font-weight="700" stroke="#fff" stroke-width="2" paint-order="stroke"><tspan fill="#4285f4">G</tspan><tspan fill="#ea4335">o</tspan><tspan fill="#fbbc05">o</tspan><tspan fill="#4285f4">g</tspan><tspan fill="#34a853">l</tspan><tspan fill="#ea4335">e</tspan></text>
<rect x="1036" y="171" width="314" height="16" fill="#f5f5f5" opacity=".6"/>
<g font-size="12.500" fill="#3a3a3a"><text x="1043" y="184" textLength="93">Map data ©2020</text><text x="1150.500" y="184" textLength="74">Terms of Use</text><text x="1239" y="184" textLength="104">Report a map error</text></g>
</svg>`;
define('street-map',`<style>:host{display:block;position:relative;width:1350px;height:187px}svg{display:block}
.v{position:absolute;left:13px;top:13px;width:145px;height:33px;background:#fff;border-radius:2px;box-shadow:0 1px 4px rgba(0,0,0,.3);box-sizing:border-box;padding-left:18.500px;font:15.500px/32px Roboto,sans-serif;color:#4272db}</style>${mapSvg}<div class="v"><fit-text w="107" t="View larger map"></fit-text></div>`);

define('form-field',`<style>:host{display:block}.l{line-height:30px;height:39px;font-size:19px}.b{height:47.500px;box-sizing:border-box;border:1px solid #ced4da;border-radius:5px;background:#e8f0fe;padding-left:15px;line-height:47px;color:#111;font-size:19px}</style><div class="l"></div><div class="b"></div>`,function(r){
  r.querySelector('.l').innerHTML=`<fit-text w="${this.getAttribute('lw')}" t="${this.getAttribute('label')}"></fit-text>`;
  r.querySelector('.b').innerHTML=`<fit-text w="${this.getAttribute('vw')}" t="${this.getAttribute('value')}"></fit-text>`;
});
const msg=[['original recipients and parties to the confidentiality agreement is',568.5],['unauthorized.  If you are not the intended recipient, any disclosure,',589],['copying, distribution, or any action taken, or omitted to be taken in',591],['reliance on it, is prohibited and may be unlawful.  All information',570],['contained herein was furnished by either buyer or seller.  Broker or',586.5],['agent has not and will not verify the accuracy or completeness of',572.5],['this information.',144.5]];
define('message-box',`<style>:host{display:block;font-size:19px}.l{line-height:30px;height:39px;padding-left:1px}
.b{box-sizing:border-box;height:227px;width:657px;border:1px solid #80bdff;border-radius:5px;box-shadow:0 0 0 4px #c4deff;background:#fff;display:flex;overflow:hidden;position:relative}
.t{flex:1;padding:0 0 0 16px;margin-top:-12px;line-height:30px;color:#495057}
.s{width:20px;margin-right:1px;display:flex;flex-direction:column;align-items:center;background:#f1f1f1;height:203px}
.s u{border:5px solid transparent;border-bottom-color:#505050;margin-top:4px}.s i{width:17px;height:21px;background:#c1c1c1;margin-top:147px}.s s{border:5px solid transparent;border-top-color:#505050;margin-top:8px}
.r{position:absolute;right:1px;bottom:1px;width:21px;height:21px;background:#dcdcdc}.g{position:absolute;left:578px;top:178px}svg{display:block}
</style><div class="l"><fit-text w="77" t="Message"></fit-text></div><div class="b"><div class="t">${msg.map(m=>`<fit-text w="${m[1]}" t="${m[0]}"></fit-text>`).join('')}</div><div class="s"><u></u><i></i><s></s></div>
<svg class="r" viewBox="0 0 21 21"><path d="M10 20L20 10M15 20l5-5" stroke="#555"/></svg>
<svg class="g" width="30" height="30"><circle cx="15" cy="15" r="15" fill="#15c39a"/><path d="M7.500 12.500A8 8 0 0 1 22.500 19" stroke="#d8f6ee" stroke-width="2" fill="none"/></svg></div>`);

define('solid-button',`<style>:host{display:flex;justify-content:center;width:328px;height:48px;border-radius:5px;background:var(--bg);color:#fff;font-size:18.700px;line-height:49px}</style><slot></slot>`);

define('contact-section',`<style>
:host{display:block;height:639px;padding:0 0 0 249px;box-sizing:border-box}
h1{margin:0;height:70px;width:1350px;display:flex;justify-content:center;font:italic 700 49.500px/62px "Open Sans";color:#007bff}
.f{display:flex;gap:38px;margin-top:28px;width:1352px}
.c{width:656px;flex:none}.row{display:flex;gap:37px;margin-top:20px}
.a{display:flex;margin-top:20px}
</style><h1><fit-text w="250" t="Contact Us"></fit-text></h1><street-map></street-map>
<div class="f"><div class="c"><form-field label="Name" lw="52" value="Rick Carlson" vw="107"></form-field>
<div class="row"><form-field style="width:309px" label="Email" lw="47" value="RC6411@ProNovaPartners.com" vw="276"></form-field><form-field style="width:310px" label="Phone" lw="56" value="8337766682" vw="108"></form-field></div></div>
<message-box style="margin-left:-1px"></message-box></div>
<div class="a"><solid-button style="--bg:#dc3545;margin-left:164px"><fit-text w="50" t="SEND"></fit-text></solid-button><solid-button style="--bg:#343a40;margin-left:365px"><fit-text w="57" t="CLEAR"></fit-text></solid-button></div>`);

define('site-footer',`<style>
:host{display:flex;height:178px;background:#343a42;color:#fff;padding:52px 0 0 262px;box-sizing:border-box;align-items:flex-start;font-size:19px;line-height:30px;overflow:hidden;position:relative}
.t{margin-top:-1px;display:flex;flex-direction:column;align-items:center}
.pop{position:absolute;left:1143px;top:167px;width:257px;height:30px;box-sizing:border-box;border:1px solid #66686b;border-radius:10px;background:#2b2b2b;box-shadow:0 0 14px 3px rgba(25,28,28,.65)}
</style><ui-icon name="pin" s="32" h="41"></ui-icon><div class="t" style="margin-left:13px;width:192px"><fit-text w="192" t="6030 Lake Worth Blvd"></fit-text><fit-text w="187" t="Fort Worth, TX 76135"></fit-text></div>
<ui-icon name="phone" s="23" h="40" style="margin-left:144px"></ui-icon><div class="t" style="margin-left:17px;width:134px"><fit-text w="133" t="(817) 231-4300"></fit-text><fit-text w="132" t="(817) 231-4301"></fit-text></div>
<ui-icon name="envelope" s="45" h="31" style="margin:5px 0 0 88px"></ui-icon><div class="t" style="margin-left:6px"><fit-text w="281" t="policyservice@empowerins.com"></fit-text></div>
<ui-icon name="twitter" s="50" style="margin:1px 0 0 151px"></ui-icon><ui-icon name="fbook" s="50" style="margin:1px 0 0 11px"></ui-icon><div class="pop"></div>`);

define('page-scroll',`<style>:host{display:flex;flex-direction:column;align-items:center;width:20px;background:#f1f1f1}u{border:5px solid transparent;border-bottom-color:#505050;margin-top:3px}i{width:17px;height:222px;background:#c1c1c1;margin-top:646px}s{border:5px solid transparent;border-top-color:#a3a3a3;margin-top:8px}</style><u></u><i></i><s></s>`);

/* Taskbar apps: icon, width, height, state (1 running, 2 active) */
const apps=[['folder',28,25,1],['edge',30,30,0],['mail',30,28,0],['skype',28,28,0],['firefox',28,28,1],['chrome',28,28,2],['zoom',28,28,1]];
define('task-bar',`<style>
:host{display:flex;height:49px;flex:none;color:#fff;background:linear-gradient(90deg,#20363f 0,#20353f 1120px,#222 1175px,#222 1365px,#1b2b40 1400px,#1a2742 100%)}
.w{width:34px;display:flex;align-items:center;flex:none}
.q{width:430px;box-sizing:border-box;background:#f1f1f1;border:1px solid #bbb;border-bottom:0;display:flex;align-items:center;padding-left:14px;font-size:19px;color:#333;line-height:46px;flex:none}
.a{height:49px;width:62px;display:flex;align-items:center;justify-content:center;flex:none;position:relative}
.a.u::after{content:"";position:absolute;left:5px;right:5px;bottom:0;height:2px;background:#76b9ed}
.a.on::before{content:"";position:absolute;left:3px;right:3px;top:14px;bottom:2px;background:#4b5c63}.a.on::after{left:3px;right:3px}
.a ui-icon{position:relative}.a .mini{position:absolute;left:29px;top:25px}
.n{display:flex;flex-direction:column;align-items:flex-end;font-size:15.600px;line-height:23px;padding-top:3px;width:121px;flex:none}
.n div{display:flex;justify-content:space-between;width:121px}
.f{width:28px;height:48px;margin:1px 0 0 8px;background:#3b4960;display:flex;align-items:center;justify-content:center;flex:none}
.t{display:flex;align-items:center;flex:none}
.c{display:flex;flex-direction:column;align-items:center;width:76px;font-size:14.400px;line-height:23px;padding-top:2px;margin-left:9px;flex:none}
.nt{position:relative;margin:15px 0 0 18px}.bd{position:absolute;left:9px;top:10px;width:19px;height:19px;border-radius:50%;background:#2c2f36;border:1px solid #888;box-sizing:border-box;font:700 13px/17px "Open Sans";text-align:center}
.e{width:4px;border-left:1px solid #7b8596;flex:none}
</style><div class="w"><ui-icon name="win" style="margin-left:-6px"></ui-icon></div><div class="q"><ui-icon name="lens"></ui-icon><fit-text style="margin-left:15px" w="163" t="Type here to search"></fit-text></div>
<div class="t" style="width:59px;justify-content:center"><ui-icon name="cortana" s="19"></ui-icon></div><div class="a" style="margin-right:3px"><ui-icon name="task" s="19"></ui-icon></div>
<div class="t" style="margin-left:-1px">${apps.map(a=>`<div class="a ${a[3]?'u':''} ${a[3]==2?'on':''}"><ui-icon name="${a[0]}" s="${a[1]}" h="${a[2]}"></ui-icon>${a[3]==2?'<ui-icon class="mini" name="bird" s="19"></ui-icon>':''}</div>`).join('')}</div>
<div class="n" style="margin-left:auto"><div><fit-text w="14" t="D:"></fit-text><fit-text w="96" t="247.96 kbit/s"></fit-text></div><div><fit-text w="14" t="U:"></fit-text><fit-text w="87" t="35.43 kbit/s"></fit-text></div></div>
<div class="t" style="margin-left:8px"><ui-icon name="chev" s="17"></ui-icon></div><div class="f"><ui-icon name="feather" s="19"></ui-icon></div>
<div class="t" style="margin-left:6px"><ui-icon name="battery" s="20"></ui-icon><ui-icon name="wifi" s="17" style="margin-left:12px"></ui-icon><ui-icon name="speaker" s="21" style="margin-left:10px"></ui-icon></div>
<div class="c"><fit-text w="52" t="4:52 PM"></fit-text><fit-text w="76" t="10/17/2020"></fit-text></div>
<div class="nt"><ui-icon name="note" h="19"></ui-icon><span class="bd">4</span></div><div style="width:25px;flex:none"></div><div class="e"></div>`);

define('desktop-screen',`<style>:host{display:flex;flex-direction:column;width:1893px;height:1079px;overflow:hidden}.v{display:flex;height:901px;flex:none}.p{width:1873px;flex:none}</style><browser-chrome></browser-chrome><div class="v"><div class="p"><review-strip></review-strip><contact-section></contact-section><site-footer></site-footer></div><page-scroll></page-scroll></div><task-bar></task-bar>`);
</script>
</body>
</html>
